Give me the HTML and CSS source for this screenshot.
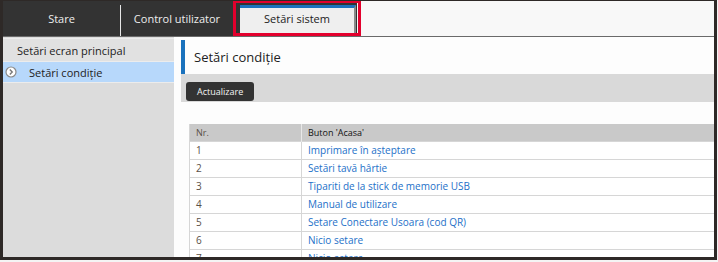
FILE: index.html
```html
<!DOCTYPE html>
<html lang="ro">
<head>
    <meta charset="UTF-8">
    <meta name="viewport" content="width=device-width, initial-scale=1.0">
    <title>Setări sistem</title>
    <link rel="stylesheet" href="styles.css">
</head>
<body>
    <div class="frame">
        <div class="tabbar">
            <div class="tabs">
                <div class="tab">Stare</div>
                <div class="tab tab-second">Control utilizator</div>
                <div class="tab tab-active">Setări sistem</div>
            </div>
            <div class="highlight"></div>
        </div>

        <div class="page">
            <ul class="sidebar">
                <li class="side-item">Setări ecran principal</li>
                <li class="side-item side-current">
                    <svg class="side-icon" width="12" height="12" viewBox="0 0 12 12">
                        <circle cx="6" cy="6" r="5" fill="#fff" stroke="#8a8a8a" stroke-width="1.2"/>
                        <path d="M4.8 3.6 L7.2 6 L4.8 8.4" fill="none" stroke="#777" stroke-width="1.4"/>
                    </svg>
                    Setări condiţie
                </li>
            </ul>

            <div class="main">
                <h1 class="title">Setări condiţie</h1>
                <div class="toolbar">
                    <button class="btn">Actualizare</button>
                </div>

                <table class="list">
                    <tr>
                        <th class="col-nr">Nr.</th>
                        <th>Buton 'Acasa'</th>
                    </tr>
                    <tr><td class="col-nr">1</td><td><a href="#">Imprimare în aşteptare</a></td></tr>
                    <tr><td class="col-nr">2</td><td><a href="#">Setări tavă hârtie</a></td></tr>
                    <tr><td class="col-nr">3</td><td><a href="#">Tipariti de la stick de memorie USB</a></td></tr>
                    <tr><td class="col-nr">4</td><td><a href="#">Manual de utilizare</a></td></tr>
                    <tr><td class="col-nr">5</td><td><a href="#">Setare Conectare Usoara (cod QR)</a></td></tr>
                    <tr><td class="col-nr">6</td><td><a href="#">Nicio setare</a></td></tr>
                    <tr><td class="col-nr">7</td><td><a href="#">Nicio setare</a></td></tr>
                </table>
            </div>
        </div>
    </div>
</body>
</html>
```

FILE: styles.css
```css
body {
    margin: 0;
    background-color: #f4f4f4;
    font-family: "Open Sans", "Noto Sans", sans-serif;
}

.frame {
    box-sizing: border-box;
    width: 717px;
    height: 260px;
    border: 3px solid #2e2927;
    border-top-width: 1px;
    background-color: #fdfdfd;
    overflow: hidden;
}

.tabbar {
    position: relative;
    height: 35px;
    background-color: #f8f8f8;
    border-bottom: 1px solid #6a6a6a;
}

.tabs {
    display: flex;
    width: 354px;
    height: 35px;
    padding-top: 4px;
    box-sizing: border-box;
    background-color: #333;
}

.tab {
    width: 117px;
    height: 31px;
    line-height: 27px;
    text-align: center;
    font-size: 11px;
    color: #eee;
}

.tab-second {
    width: 112px;
    border-left: 1px solid #e6e6e6;
}

.tab-active {
    box-sizing: border-box;
    width: 116px;
    height: 28px;
    margin-left: 7px;
    border-top: 3px solid #1b72bd;
    border-right: 2px solid #8a8a8a;
    background-color: #efefef;
    color: #222;
    line-height: 22px;
}

.highlight {
    position: absolute;
    left: 230px;
    top: -1px;
    width: 128px;
    height: 36px;
    box-sizing: border-box;
    border: 3px solid #e3002d;
}

.page {
    display: flex;
    height: 221px;
}

.sidebar {
    list-style: none;
    margin: 0;
    padding: 1px 0 0;
    width: 171px;
    background-color: #dcdcdc;
}

.side-item {
    display: flex;
    align-items: center;
    height: 21px;
    padding-left: 14px;
    padding-top: 1px;
    box-sizing: content-box;
    font-size: 11px;
    color: #222;
    background-color: #e1e1e1;
    border-top: 1px solid #ececec;
    border-bottom: 1px solid #ececec;
}

.side-current {
    height: 20px;
    padding-top: 0;
    padding-left: 2px;
    border-top: none;
    background-color: #b7d8fb;
}

.side-icon {
    margin-right: 12px;
}

.main {
    flex: 1;
    margin-left: 7px;
}

.title {
    margin: 3px 0 0;
    height: 34px;
    line-height: 34px;
    padding-left: 9px;
    border-left: 4px solid #1b72bd;
    font-size: 13px;
    font-weight: normal;
    color: #222;
}

.toolbar {
    height: 28px;
    padding: 4px 5px;
    box-sizing: border-box;
    background-color: #d9d9d9;
}

.btn {
    height: 19px;
    padding: 0 11px;
    border: none;
    border-radius: 3px;
    background-color: #333;
    color: #f4f4f4;
    font-family: inherit;
    font-size: 9px;
}

.list {
    margin: 22px 0 0 8px;
    width: 525px;
    border-collapse: collapse;
    font-size: 10px;
}

.list th {
    height: 17px;
    padding: 0 6px;
    text-align: left;
    font-weight: normal;
    font-size: 9px;
    color: #111;
    background-color: #c9c9c9;
    border-left: 1px solid #e8e8e8;
}

.list td {
    height: 16px;
    padding: 0 6px 1px;
    line-height: 12px;
    border-top: 1px solid #d6d6d6;
    border-left: 1px solid #d6d6d6;
    background-color: #fff;
}

.list .col-nr {
    width: 99px;
    color: #5a5047;
    border-left: 1px solid #d6d6d6;
}

.list a {
    color: #2470c8;
    text-decoration: none;
}
```
